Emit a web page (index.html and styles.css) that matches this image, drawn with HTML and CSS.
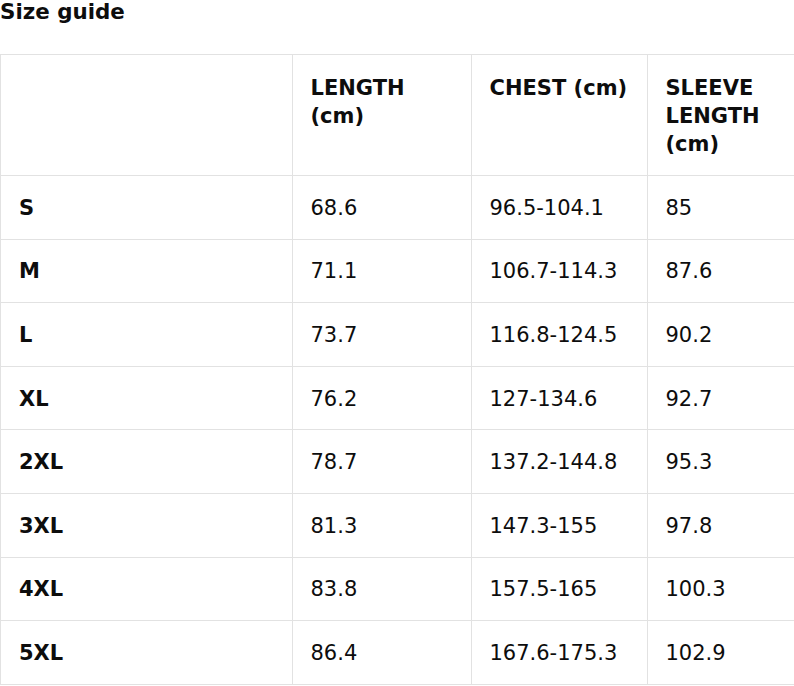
FILE: index.html
```html
<!DOCTYPE html>
<html lang="en">
<head>
<meta charset="utf-8">
<title>Size guide</title>
<link rel="stylesheet" href="styles.css">
</head>
<body>
<div class="page">
  <h2 class="title">Size guide</h2>
  <div class="table-wrap">
    <table class="size-table">
      <colgroup>
        <col class="c1"><col class="c2"><col class="c3"><col class="c4">
      </colgroup>
      <thead>
        <tr>
          <th></th>
          <th>LENGTH<br>(cm)</th>
          <th>CHEST (cm)</th>
          <th>SLEEVE<br>LENGTH<br>(cm)</th>
        </tr>
      </thead>
      <tbody>
        <tr><th>S</th><td>68.6</td><td>96.5-104.1</td><td>85</td></tr>
        <tr><th>M</th><td>71.1</td><td>106.7-114.3</td><td>87.6</td></tr>
        <tr><th>L</th><td>73.7</td><td>116.8-124.5</td><td>90.2</td></tr>
        <tr><th>XL</th><td>76.2</td><td>127-134.6</td><td>92.7</td></tr>
        <tr><th>2XL</th><td>78.7</td><td>137.2-144.8</td><td>95.3</td></tr>
        <tr><th>3XL</th><td>81.3</td><td>147.3-155</td><td>97.8</td></tr>
        <tr><th>4XL</th><td>83.8</td><td>157.5-165</td><td>100.3</td></tr>
        <tr><th>5XL</th><td>86.4</td><td>167.6-175.3</td><td>102.9</td></tr>
      </tbody>
    </table>
  </div>
</div>
</body>
</html>
```

FILE: styles.css
```css
html, body {
  margin: 0;
  padding: 0;
  background: #ffffff;
  overflow: hidden;
}

.page {
  width: 794px;
  height: 686px;
  overflow: hidden;
  font-family: "DejaVu Sans", Verdana, sans-serif;
  color: #0d0d0d;
  font-size: 21px;
}

.title {
  margin: 0 0 30px 0;
  font-size: 21.4px;
  line-height: 24px;
  font-weight: bold;
}

.table-wrap {
  width: 794px;
  overflow: hidden;
}

.size-table {
  border-collapse: collapse;
  table-layout: fixed;
  width: 824px;
}

.c1 { width: 292px; }
.c2 { width: 179px; }
.c3 { width: 176px; }
.c4 { width: 177px; }

.size-table th,
.size-table td {
  border: 1px solid #e2e2e2;
  padding: 17.8px 17px 16.8px 18px;
  line-height: 28px;
  text-align: left;
  vertical-align: top;
  font-size: 21px;
}

.size-table td,
.size-table thead th {
  padding-left: 17.5px;
}

.size-table th {
  font-weight: bold;
}

.size-table td {
  font-weight: normal;
}

.size-table thead th {
  padding-top: 18.5px;
  padding-bottom: 17.5px;
}
```
